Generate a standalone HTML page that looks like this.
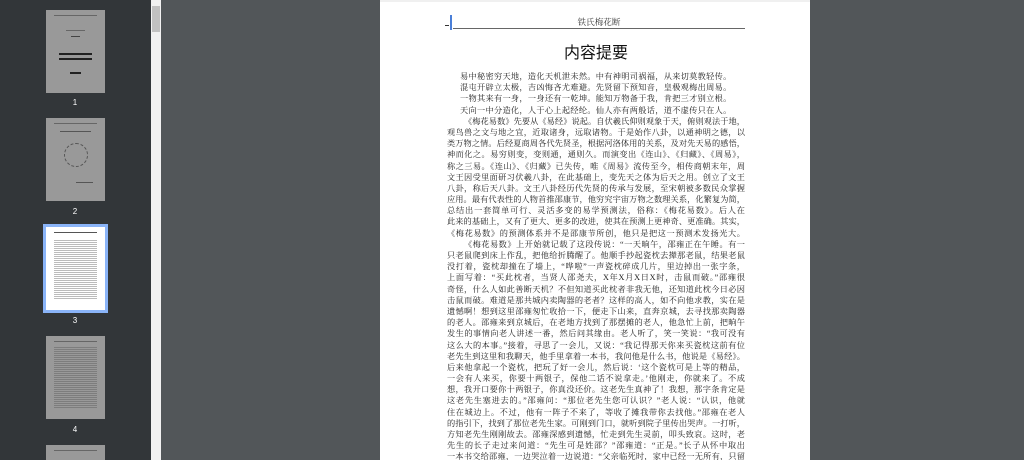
<!DOCTYPE html>
<html><head><meta charset="utf-8">
<style>
*{margin:0;padding:0;box-sizing:border-box}
html,body{width:1024px;height:460px;overflow:hidden;background:#525659;position:relative}
#side{position:absolute;left:0;top:0;width:151px;height:460px;background:#323639;overflow:hidden}
#sb{position:absolute;left:151px;top:0;width:10px;height:460px;background:#f1f1f1}
#sb .t{position:absolute;left:1px;top:6px;width:8px;height:26px;background:#c1c1c1}
.th{position:absolute;left:46px;width:59px;height:83px;background:#999}
.th .ln{position:absolute;left:8px;right:8px;height:1px;background:#666}
.th .tx{position:absolute;left:9px;right:9px;height:1px;background:#7a7a7a}
.lab{position:absolute;left:70px;width:10px;text-align:center;color:#fff;font:8px "Liberation Sans",sans-serif}
#sel{position:absolute;left:43px;top:224px;width:65px;height:89px;background:#8ab4f8;padding:3px}
#sel .in{width:59px;height:83px;background:#fff;position:relative}
#page{position:absolute;left:380px;top:0;width:430px;height:460px;background:#fff;overflow:hidden}
#page .top{position:absolute;left:0;top:0;width:430px;height:2px;background:#f0f0f0}
.hd{position:absolute;left:73px;top:16px;width:292px;text-align:center;font:8.6px "Liberation Serif","Noto Serif CJK SC",serif;color:#333}
.hl{position:absolute;left:73px;top:28px;width:292px;height:1px;background:#666}
.cur{position:absolute;left:70px;top:15px;width:1.5px;height:15px;background:#4a7fd8}
.dash{position:absolute;left:65px;top:25px;width:4px;height:1px;background:#333}
.ti{position:absolute;left:0;top:39px;width:430px;text-align:center;font:16px "Liberation Sans","Noto Sans CJK SC",sans-serif;color:#111;padding-left:2px}
.bd{position:absolute;left:67px;top:71px;width:298px;height:389px;clip-path:inset(0 -30px 0 -30px);font:8.2px/11.2px "Liberation Serif","Noto Serif CJK SC",serif;color:#222}
.bd div{white-space:nowrap;text-align:justify;text-align-last:justify;height:11.2px;overflow:visible}
.bd div.p{text-align:left;text-align-last:left;padding-left:13px;letter-spacing:0.3px}
</style></head><body>
<div id="side">
 <div class="th" style="top:10px">
  <div class="ln" style="top:5px"></div>
  <div class="tx" style="top:20px;left:20px;right:20px;background:#666"></div>
  <div class="tx" style="top:26px;left:25px;right:25px;background:#444"></div>
  <div class="tx" style="top:43px;left:13px;right:13px;height:2px;background:#222"></div>
  <div class="tx" style="top:48px;left:13px;right:13px;height:2px;background:#222"></div>
  <div class="tx" style="top:62px;left:24px;right:24px;height:2px;background:#222"></div>
 </div>
 <div class="lab" style="top:98px">1</div>
 <div class="th" style="top:118px">
  <div class="ln" style="top:5px"></div>
  <div class="tx" style="top:13px;left:14px;right:14px;background:#555"></div>
  <div style="position:absolute;left:18px;top:25px;width:24px;height:24px;border-radius:50%;border:1px dashed #555"></div>
  <div class="tx" style="top:64px;left:30px;right:12px;background:#555"></div>
 </div>
 <div class="lab" style="top:207px">2</div>
 <div id="sel"><div class="in">
  <div class="ln" style="position:absolute;left:8px;right:8px;top:5px;height:1px;background:#555"></div>
  <div style="position:absolute;left:8px;right:8px;top:12px;bottom:10px;background:repeating-linear-gradient(#fff 0,#fff 1px,#bbb 1px,#bbb 2px)"></div>
 </div></div>
 <div class="lab" style="top:316px">3</div>
 <div class="th" style="top:336px">
  <div class="ln" style="top:5px"></div>
  <div style="position:absolute;left:8px;right:8px;top:10px;bottom:10px;background:repeating-linear-gradient(#999 0,#999 1px,#7d7d7d 1px,#7d7d7d 2px)"></div>
 </div>
 <div class="lab" style="top:425px">4</div>
 <div class="th" style="top:445px;height:15px">
  <div class="ln" style="top:5px"></div>
 </div>
</div>
<div id="sb"><div class="t"></div></div>
<div id="page">
 <div class="top"></div>
 <div class="dash"></div><div class="cur"></div>
 <div class="hd">铁氏梅花断</div>
 <div class="hl"></div>
 <div class="ti">内容提要</div>
 <div class="bd">
<div class="p">易中秘密穷天地，造化天机泄未然。中有神明司祸福，从来切莫教轻传。</div>
<div class="p">混屯开辟立太极，吉凶悔吝尤难避。先贤留下预知音，皇极观梅出周易。</div>
<div class="p">一物其来有一身，一身还有一乾坤。能知万物备于我，肯把三才别立根。</div>
<div class="p">天向一中分造化，人于心上起经纶。仙人亦有两般话，道不虚传只在人。</div>
<div style="padding-left:17px">《梅花易数》先要从《易经》说起。自伏羲氏仰则观象于天，俯则观法于地，</div>
<div>观鸟兽之文与地之宜，近取诸身，远取诸物。于是始作八卦，以通神明之德，以</div>
<div>类万物之情。后经夏商周各代先贤圣，根据河洛体用的关系，及对先天易的感悟，</div>
<div>神而化之。易穷则变，变则通，通则久。而演变出《连山》、《归藏》、《周易》，</div>
<div>称之三易。《连山》、《归藏》已失传，唯《周易》流传至今，相传商朝末年，周</div>
<div>文王因受里面研习伏羲八卦，在此基础上，变先天之体为后天之用。创立了文王</div>
<div>八卦，称后天八卦。文王八卦经历代先贤的传承与发展，至宋朝被多数民众掌握</div>
<div>应用。最有代表性的人物首推邵康节，他穷究宇宙万物之数理关系，化繁复为简，</div>
<div>总结出一套简单可行、灵活多变的易学预测法，俗称：《梅花易数》。后人在</div>
<div>此来的基础上，又有了更大、更多的改进，使其在预测上更神奇、更准确。其实，</div>
<div>《梅花易数》的预测体系并不是邵康节所创，他只是把这一预测术发扬光大。</div>
<div style="padding-left:17px">《梅花易数》上开始就记载了这段传说：“一天晌午，邵雍正在午睡。有一</div>
<div>只老鼠爬到床上作乱，把他给折腾醒了。他顺手抄起瓷枕去撵那老鼠，结果老鼠</div>
<div>没打着，瓷枕却撞在了墙上，“哗啦”一声瓷枕碎成几片，里边掉出一张字条，</div>
<div>上面写着：“买此枕者，当贤人邵尧夫，X年X月X日X时，击鼠而破。”邵雍很</div>
<div>奇怪，什么人如此善断天机？不但知道买此枕者非我无他，还知道此枕今日必因</div>
<div>击鼠而破。难道是那共城内卖陶器的老者？这样的高人，如不向他求教，实在是</div>
<div>遗憾啊！想到这里邵雍匆忙收拾一下，便走下山来，直奔京城，去寻找那卖陶器</div>
<div>的老人。邵雍来到京城后，在老地方找到了那摆摊的老人，他急忙上前，把晌午</div>
<div>发生的事情向老人讲述一番，然后问其缘由。老人听了，笑一笑说：“我可没有</div>
<div>这么大的本事。”接着，寻思了一会儿，又说：“我记得那天你来买瓷枕这前有位</div>
<div>老先生到这里和我聊天，他手里拿着一本书，我问他是什么书，他说是《易经》。</div>
<div>后来他拿起一个瓷枕，把玩了好一会儿，然后说：‘这个瓷枕可是上等的精品，</div>
<div>一会有人来买，你要十两银子，保他二话不说拿走。’他刚走，你就来了。不成</div>
<div>想，我开口要你十两银子，你真没还价。这老先生真神了！我想，那字条肯定是</div>
<div>这老先生塞进去的。”邵雍问：“那位老先生您可认识？”老人说：“认识，他就</div>
<div>住在城边上。不过，他有一阵子不来了，等收了摊我带你去找他。”邵雍在老人</div>
<div>的指引下，找到了那位老先生家。可刚到门口，就听到院子里传出哭声。一打听，</div>
<div>方知老先生刚刚故去。邵雍深感到遗憾，忙走到先生灵前，叩头致哀。这时，老</div>
<div>先生的长子走过来问道：“先生可是姓邵？”邵雍道：“正是。”长子从怀中取出</div>
<div>一本书交给邵雍，一边哭泣着一边说道：“父亲临死时，家中已经一无所有，只留</div>
 </div>
</div>
</body></html>
